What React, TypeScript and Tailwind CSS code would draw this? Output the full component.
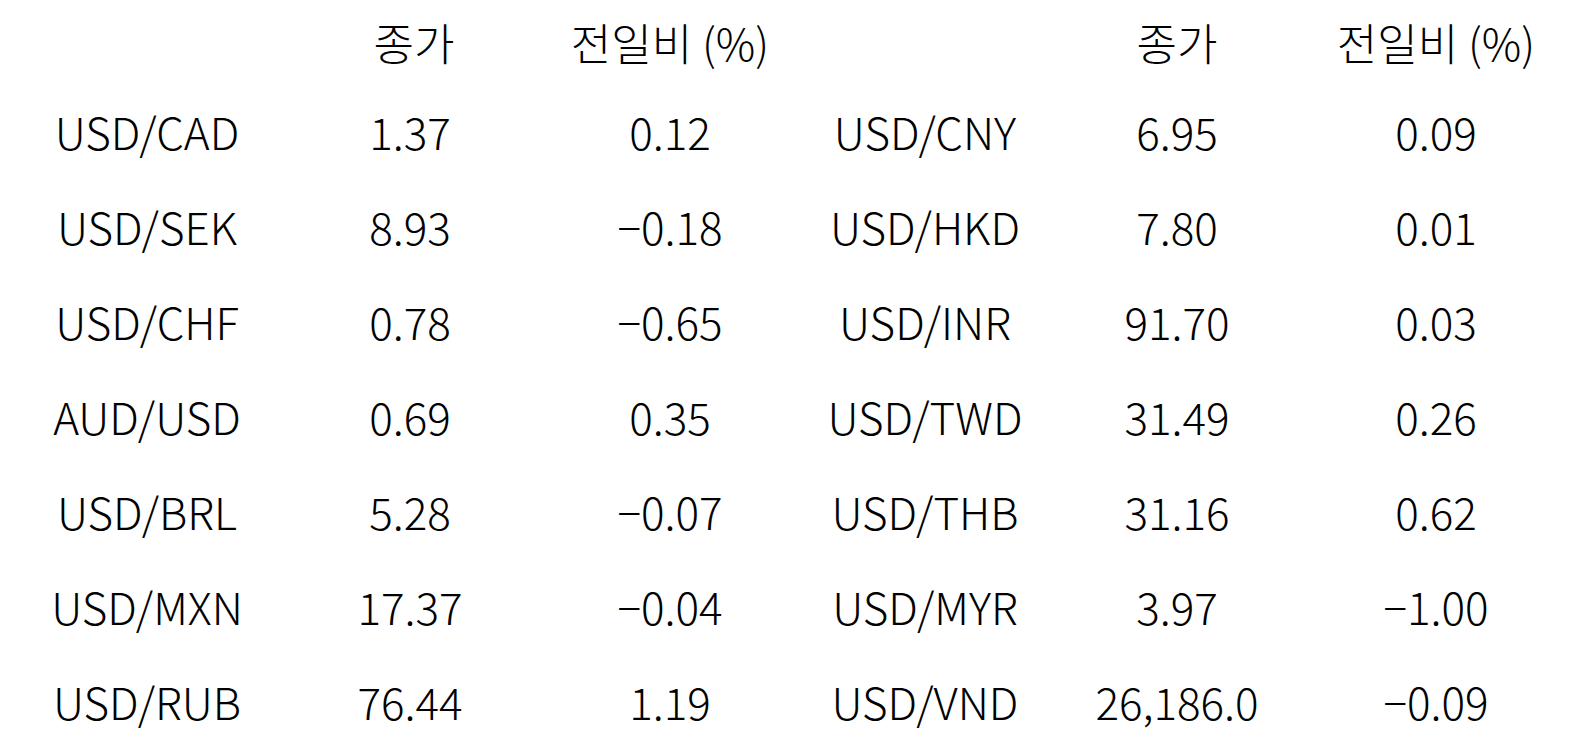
// FX closing table: two side-by-side blocks of currency pairs with close and daily change.

const LEFT: [string, string, string][] = [
  ["USD/CAD", "1.37", "0.12"],
  ["USD/SEK", "8.93", "−0.18"],
  ["USD/CHF", "0.78", "−0.65"],
  ["AUD/USD", "0.69", "0.35"],
  ["USD/BRL", "5.28", "−0.07"],
  ["USD/MXN", "17.37", "−0.04"],
  ["USD/RUB", "76.44", "1.19"],
];

const RIGHT: [string, string, string][] = [
  ["USD/CNY", "6.95", "0.09"],
  ["USD/HKD", "7.80", "0.01"],
  ["USD/INR", "91.70", "0.03"],
  ["USD/TWD", "31.49", "0.26"],
  ["USD/THB", "31.16", "0.62"],
  ["USD/MYR", "3.97", "−1.00"],
  ["USD/VND", "26,186.0", "−0.09"],
];

const COLS = "grid grid-cols-[294px_232px_288px_222px_282px_236px]";

export default function App() {
  return (
    <div
      className="w-[1570px] h-[748px] overflow-hidden bg-white text-black text-[44px] font-light leading-none"
      style={{ fontFamily: '"Noto Sans CJK KR", "Noto Sans", sans-serif' }}
    >
      <div className={`${COLS} h-[83px] items-center text-center`}>
        <span />
        <span className="pl-[8px]">종가</span>
        <span>전일비 (%)</span>
        <span />
        <span>종가</span>
        <span>전일비 (%)</span>
      </div>
      {LEFT.map((row, i) => (
        <div key={row[0]} className={`${COLS} h-[95px] items-center text-center`}>
          {[...row, ...RIGHT[i]].map((cell, j) => (
            <span key={j}>{cell}</span>
          ))}
        </div>
      ))}
    </div>
  );
}
